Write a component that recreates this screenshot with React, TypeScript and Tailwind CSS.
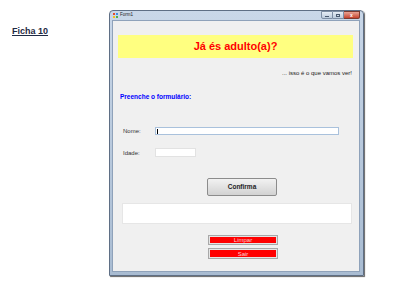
const ui = { fontFamily: '"Liberation Sans", Arial, sans-serif' };

function TitleButtons() {
  return (
    <div className="flex items-start h-[9px] mr-[3px]">
      <div className="w-[12px] h-[8px] rounded-bl-[2px] border border-[#7d8da3] bg-gradient-to-b from-[#e6edf5] to-[#bccbdc] flex items-end justify-center pb-[1px]">
        <div className="w-[4px] h-[1px] bg-[#4a5a70]" />
      </div>
      <div className="w-[11px] h-[8px] border-y border-r border-[#7d8da3] bg-gradient-to-b from-[#e6edf5] to-[#bccbdc] flex items-center justify-center">
        <div className="w-[4px] h-[3px] border border-[#4a5a70]" />
      </div>
      <div className="w-[16px] h-[8px] rounded-br-[2px] border-y border-r border-[#7a3a30] bg-gradient-to-b from-[#e8a293] to-[#c5402c] flex items-center justify-center">
        <span className="text-[5px] leading-none font-bold text-white">x</span>
      </div>
    </div>
  );
}

function RedButton({ label, h }: { label: string; h: string }) {
  return (
    <div className={`ml-[95px] w-[70px] ${h} border border-[#a8a8a8] bg-[#e4e4e4] p-[1px]`}>
      <div className="h-full bg-[#ff0000] flex items-center justify-center text-[6px] leading-none text-[#ffd0d0]">
        {label}
      </div>
    </div>
  );
}

export default function App() {
  return (
    <div className="w-[400px] h-[302px] bg-white flex" style={ui}>
      <div className="w-[109px] pl-[12px] pt-[17px]">
        <span className="text-[9px] font-bold underline text-[#1f2a44] leading-none">Ficha 10</span>
      </div>

      <div className="mt-[10px] w-[255px] h-[266px] rounded-t-[4px] border border-[#5f6f85] bg-gradient-to-b from-[#c9d7e8] to-[#a9bcd2] shadow-[1px_1px_1px_rgba(0,0,0,0.6)] flex flex-col">
        <div className="h-[9px] flex items-start justify-between">
          <div className="flex items-center gap-[2px] pl-[3px] pt-[2px]">
            <div className="w-[5px] h-[5px] grid grid-cols-2 gap-[0.5px]">
              <div className="bg-[#e24b2c]" />
              <div className="bg-[#3a8ee6]" />
              <div className="bg-[#f4c020]" />
              <div className="bg-[#4caf50]" />
            </div>
            <span className="text-[4.5px] leading-none text-[#222]">Form1</span>
          </div>
          <TitleButtons />
        </div>

        <div className="mx-[2px] mr-[3px] mb-[3px] flex-1 bg-[#f0f0f0] border border-[#8fa2ba]">
          <div className="mt-[14px] ml-[5px] w-[235px] h-[23px] bg-[#ffff80] flex items-center justify-center text-[11px] font-bold text-[#ff0000] leading-none">
            Já és adulto(a)?
          </div>

          <div className="mt-[11px] pr-[7px] text-right text-[6px] leading-[8px] text-[#222]">
            ... isso é o que vamos ver!
          </div>

          <div className="mt-[16px] pl-[7px] text-[6.5px] leading-[8px] font-bold text-[#0000ff]">
            Preenche o formulário:
          </div>

          <div className="mt-[26px] flex items-center h-[8px]">
            <span className="pl-[10px] w-[42px] text-[6px] leading-none text-[#333]">Nome:</span>
            <div className="w-[184px] h-[8px] bg-white border border-[#a9c1dc] flex items-center pl-[1px]">
              <div className="w-[1px] h-[5px] bg-black" />
            </div>
          </div>

          <div className="mt-[13px] flex items-center h-[9px]">
            <span className="pl-[10px] w-[42px] text-[6px] leading-none text-[#333]">Idade:</span>
            <div className="w-[41px] h-[9px] bg-white border border-[#e2e2e2]" />
          </div>

          <div className="mt-[21px] ml-[94px] w-[70px] h-[18px] rounded-[2px] border border-[#8c8c8c] bg-gradient-to-b from-[#f2f2f2] to-[#d2d2d2] flex items-center justify-center text-[6.5px] font-bold leading-none text-[#222]">
            Confirma
          </div>

          <div className="mt-[7px] ml-[9px] w-[230px] h-[21px] bg-white border border-[#e6e6e6]" />

          <div className="mt-[11px]">
            <RedButton label="Limpar" h="h-[10px]" />
          </div>
          <div className="mt-[3px]">
            <RedButton label="Sair" h="h-[11px]" />
          </div>
        </div>
      </div>
    </div>
  );
}
